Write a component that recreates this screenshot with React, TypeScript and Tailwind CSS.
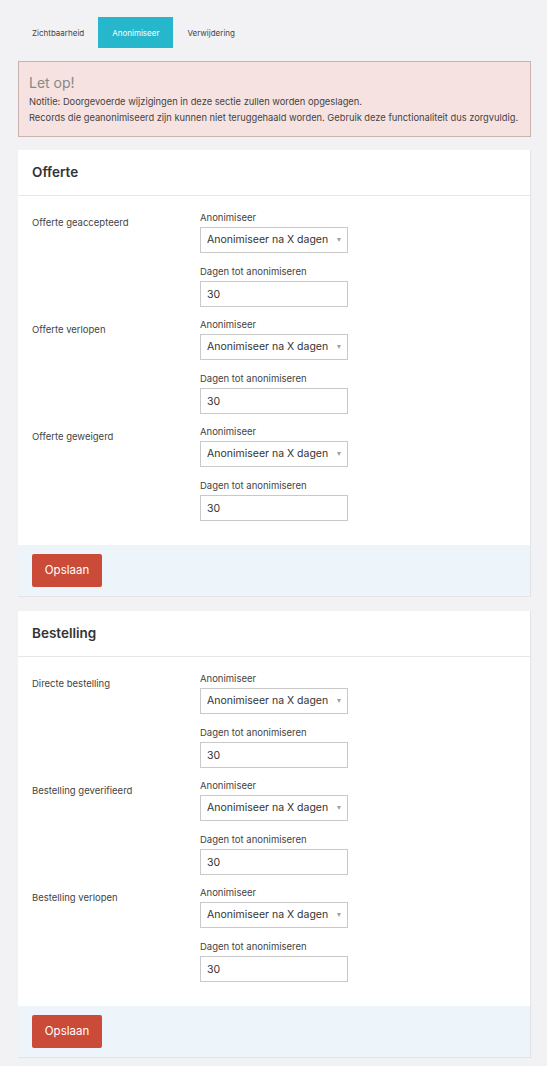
import { ChangeEvent, useState } from "react";

type Status = {
  id: string;
  label: string;
};

type Section = {
  id: string;
  title: string;
  statuses: Status[];
};

const tabs = ["Zichtbaarheid", "Anonimiseer", "Verwijdering"];

const sections: Section[] = [
  {
    id: "offerte",
    title: "Offerte",
    statuses: [
      { id: "accepted", label: "Offerte geaccepteerd" },
      { id: "expired", label: "Offerte verlopen" },
      { id: "declined", label: "Offerte geweigerd" },
    ],
  },
  {
    id: "bestelling",
    title: "Bestelling",
    statuses: [
      { id: "direct", label: "Directe bestelling" },
      { id: "verified", label: "Bestelling geverifieerd" },
      { id: "expired", label: "Bestelling verlopen" },
    ],
  },
];

function StatusRow({ status }: { status: Status }) {
  const [mode, setMode] = useState("days");
  const [days, setDays] = useState("30");

  return (
    <div className="flex">
      <span className="w-[168px] shrink-0 pt-[5px] text-[9.5px] leading-[13px] text-[#444]">
        {status.label}
      </span>
      <div className="flex w-[148px] flex-col">
        <label className="mb-[3px] text-[9.5px] leading-[13px] text-[#444]">Anonimiseer</label>
        <div className="relative">
          <select
            value={mode}
            onChange={(e: ChangeEvent<HTMLSelectElement>) => setMode(e.target.value)}
            className="block h-[26px] w-full appearance-none rounded-none border border-[#c9c9c9] bg-white pl-[6px] text-[10.5px] text-[#333] outline-none"
          >
            <option value="days">Anonimiseer na X dagen</option>
            <option value="never">Niet anonimiseren</option>
          </select>
          <span className="pointer-events-none absolute right-[7px] top-[11px] h-0 w-0 border-x-[2.5px] border-t-[4px] border-x-transparent border-t-[#a0a0a0]" />
        </div>
        <label className="mb-[3px] mt-[12px] text-[9.5px] leading-[13px] text-[#444]">
          Dagen tot anonimiseren
        </label>
        <input
          value={days}
          onChange={(e) => setDays(e.target.value)}
          className="block h-[26px] w-full border border-[#c9c9c9] bg-white pl-[6px] text-[10.5px] text-[#333] outline-none"
        />
      </div>
    </div>
  );
}

function SectionCard({ section }: { section: Section }) {
  return (
    <div className="border-b border-r border-[#e3e3e5] bg-white">
      <div className="flex h-[46px] items-center border-b border-[#e6e6e6] px-[14px]">
        <h2 className="text-[13.5px] font-semibold text-[#333]">{section.title}</h2>
      </div>
      <div className="flex flex-col gap-[11px] px-[14px] pb-[24px] pt-[15px]">
        {section.statuses.map((status) => (
          <StatusRow key={status.id} status={status} />
        ))}
      </div>
      <div className="bg-[#edf5fb] px-[14px] py-[9px]">
        <button className="h-[33px] w-[70px] rounded-[2px] bg-[#cb4b39] text-[11.5px] text-white">
          Opslaan
        </button>
      </div>
    </div>
  );
}

export default function App() {
  const [activeTab, setActiveTab] = useState("Anonimiseer");

  return (
    <div className="min-h-screen bg-[#f2f2f4] pb-[8px] pl-[18px] pr-[16px] pt-[17px] font-[Inter,sans-serif]">
      <div className="mb-[13px] flex">
        {tabs.map((tab) => (
          <button
            key={tab}
            onClick={() => setActiveTab(tab)}
            className={
              tab === activeTab
                ? "h-[31px] bg-[#27b7cc] px-[14px] text-[8px] text-white"
                : "h-[31px] px-[14px] text-[8px] text-[#444]"
            }
          >
            {tab}
          </button>
        ))}
      </div>

      <div className="mb-[13px] border border-[#c9b2af] bg-[#f6e2e0] px-[10px] pb-[10px] pt-[11px]">
        <h3 className="mb-[1px] text-[14px] leading-[20px] text-[#888]">Let op!</h3>
        <p className="text-[9.3px] leading-[16px] text-[#444]">
          Notitie: Doorgevoerde wijzigingen in deze sectie zullen worden opgeslagen.
        </p>
        <p className="text-[9.3px] leading-[16px] text-[#444]">
          Records die geanonimiseerd zijn kunnen niet teruggehaald worden. Gebruik deze
          functionaliteit dus zorgvuldig.
        </p>
      </div>

      <div className="flex flex-col gap-[14px]">
        {sections.map((section) => (
          <SectionCard key={section.id} section={section} />
        ))}
      </div>
    </div>
  );
}
